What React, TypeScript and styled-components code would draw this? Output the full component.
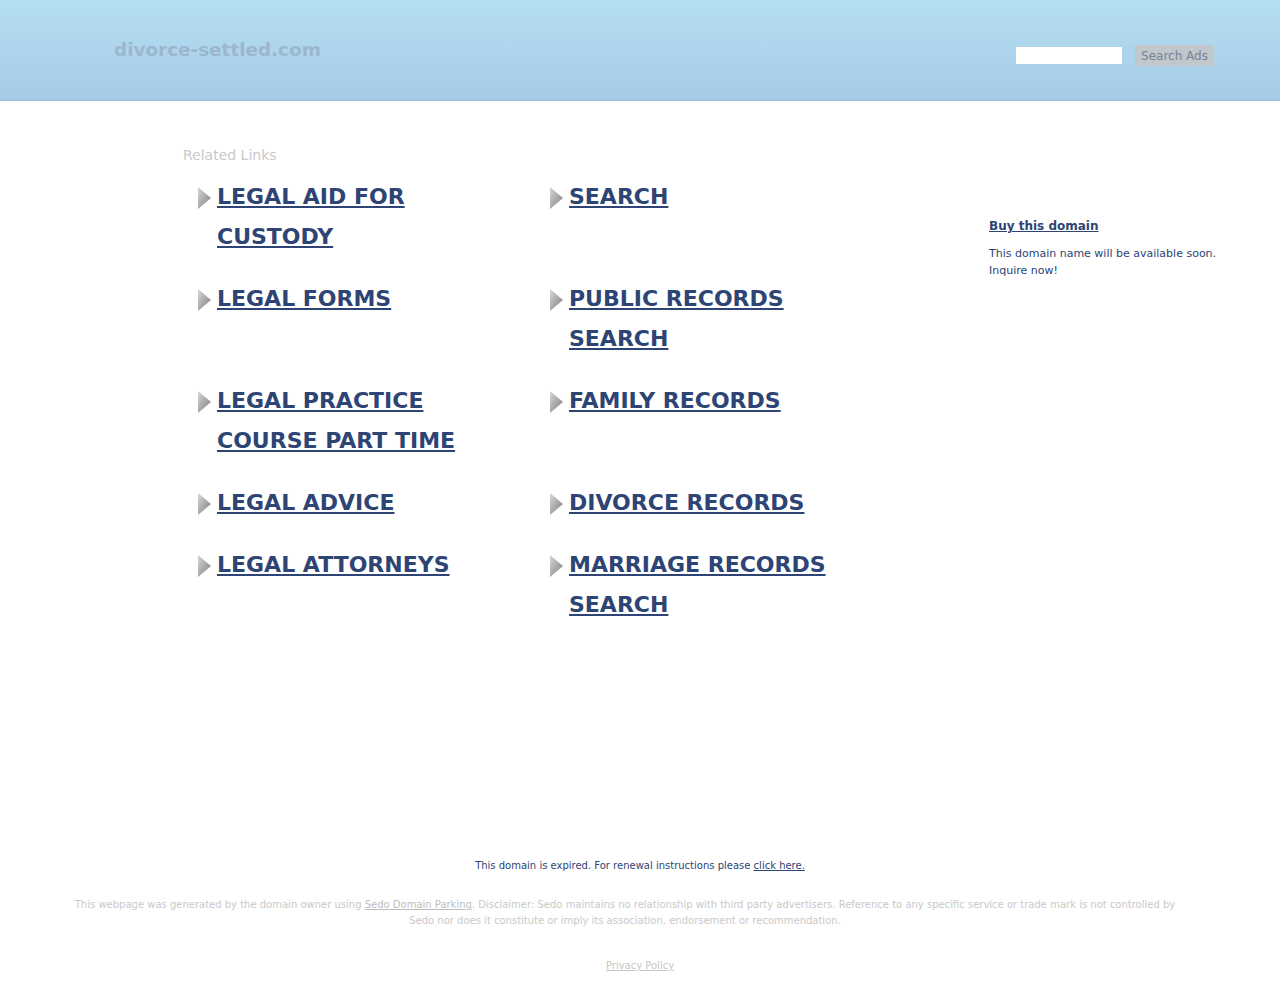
import React from 'react';
import styled, { createGlobalStyle } from 'styled-components';

const GlobalStyle = createGlobalStyle`
  html, body {
    margin: 0;
    padding: 0;
    background: #fff;
    font-family: "DejaVu Sans", Verdana, sans-serif;
  }
`;

const Page = styled.div`
  width: 1280px;
  min-height: 990px;
`;

const Header = styled.header`
  height: 99px;
  background: linear-gradient(180deg, #b4def3 0%, #a7cce6 100%);
  border-bottom: 2px solid #a2c3dd;
  display: flex;
  justify-content: space-between;
  padding: 0 66px 0 114px;
`;

const DomainName = styled.div`
  margin-top: 39px;
  font-size: 18.4px;
  font-weight: bold;
  color: #9db6cf;
`;

const SearchForm = styled.form`
  display: flex;
  align-items: center;
  gap: 13px;
  margin-top: 45px;
  height: 21px;
`;

const SearchInput = styled.input`
  width: 106px;
  height: 17px;
  box-sizing: border-box;
  border: none;
  background: #fff;
  padding: 0 4px;
`;

const SearchButton = styled.button`
  height: 21px;
  width: 79px;
  border: none;
  background: #c2c7cc;
  color: #73859a;
  font-family: "DejaVu Sans", Verdana, sans-serif;
  font-size: 12px;
  padding: 0;
`;

const Main = styled.main`
  display: flex;
  padding: 46px 0 0 183px;
`;

const LinksColumn = styled.section`
  width: 806px;
`;

const SectionTitle = styled.div`
  font-size: 14px;
  color: #c9c9c9;
  line-height: 17px;
  margin-bottom: 13px;
`;

const LinkGrid = styled.ul`
  list-style: none;
  margin: 0;
  padding: 0 0 0 14px;
  display: grid;
  grid-template-columns: 352px 352px;
  row-gap: 22px;
`;

const LinkItem = styled.li`
  display: flex;
  align-items: flex-start;
  padding-right: 64px;
`;

const Arrow = styled.svg`
  flex: none;
  width: 20px;
  height: 22px;
  margin-top: 10px;
`;

const BigLink = styled.a`
  font-size: 22px;
  font-weight: bold;
  line-height: 40px;
  color: #2d4474;
  text-decoration: underline;
  text-transform: uppercase;
`;

const Sidebar = styled.aside`
  margin-top: 71px;
  width: 240px;
`;

const BuyLink = styled.a`
  display: block;
  font-size: 12px;
  font-weight: bold;
  color: #2d4474;
  text-decoration: underline;
  line-height: 16px;
  margin-bottom: 11px;
`;

const SideText = styled.p`
  margin: 0;
  font-size: 11px;
  line-height: 17px;
  color: #2d4474;
`;

const Footer = styled.footer`
  margin-top: 234px;
  text-align: center;
`;

const Expired = styled.p`
  margin: 0;
  font-size: 10px;
  line-height: 14px;
  color: #2d4474;

  a {
    color: #2d4474;
  }
`;

const Disclaimer = styled.p`
  margin: 24px 0 0 65px;
  width: 1120px;
  font-size: 10px;
  line-height: 16px;
  color: #c9c9c9;

  a {
    color: #bdbdbd;
  }
`;

const Privacy = styled.a`
  display: inline-block;
  margin-top: 31px;
  font-size: 10px;
  color: #c6c6c6;
  text-decoration: underline;
`;

const links: string[][] = [
  ['Legal Aid for Custody', 'Search'],
  ['Legal Forms', 'Public Records Search'],
  ['Legal Practice Course Part Time', 'Family Records'],
  ['Legal Advice', 'Divorce Records'],
  ['Legal Attorneys', 'Marriage Records Search'],
];

function ArrowIcon() {
  return (
    <Arrow viewBox="0 0 20 22">
      <defs>
        <linearGradient id="arrowShade" x1="0" y1="0" x2="1" y2="1">
          <stop offset="0" stopColor="#d8d8d8" />
          <stop offset="1" stopColor="#7c7c7c" />
        </linearGradient>
      </defs>
      <path d="M1 0 L14 11 L1 22 Z" fill="url(#arrowShade)" />
    </Arrow>
  );
}

export default function App() {
  return (
    <Page>
      <GlobalStyle />
      <Header>
        <DomainName>divorce-settled.com</DomainName>
        <SearchForm onSubmit={(e) => e.preventDefault()}>
          <SearchInput type="text" />
          <SearchButton type="submit">Search Ads</SearchButton>
        </SearchForm>
      </Header>

      <Main>
        <LinksColumn>
          <SectionTitle>Related Links</SectionTitle>
          <LinkGrid>
            {links.flat().map((label) => (
              <LinkItem key={label}>
                <ArrowIcon />
                <BigLink href="#">{label}</BigLink>
              </LinkItem>
            ))}
          </LinkGrid>
        </LinksColumn>
        <Sidebar>
          <BuyLink href="#">Buy this domain</BuyLink>
          <SideText>
            This domain name will be available soon.
            <br />
            Inquire now!
          </SideText>
        </Sidebar>
      </Main>

      <Footer>
        <Expired>
          This domain is expired. For renewal instructions please <a href="#">click here.</a>
        </Expired>
        <Disclaimer>
          This webpage was generated by the domain owner using <a href="#">Sedo Domain Parking</a>.
          Disclaimer: Sedo maintains no relationship with third party advertisers. Reference to any
          specific service or trade mark is not controlled by Sedo nor does it constitute or imply its
          association, endorsement or recommendation.
        </Disclaimer>
        <Privacy href="#">Privacy Policy</Privacy>
      </Footer>
    </Page>
  );
}
